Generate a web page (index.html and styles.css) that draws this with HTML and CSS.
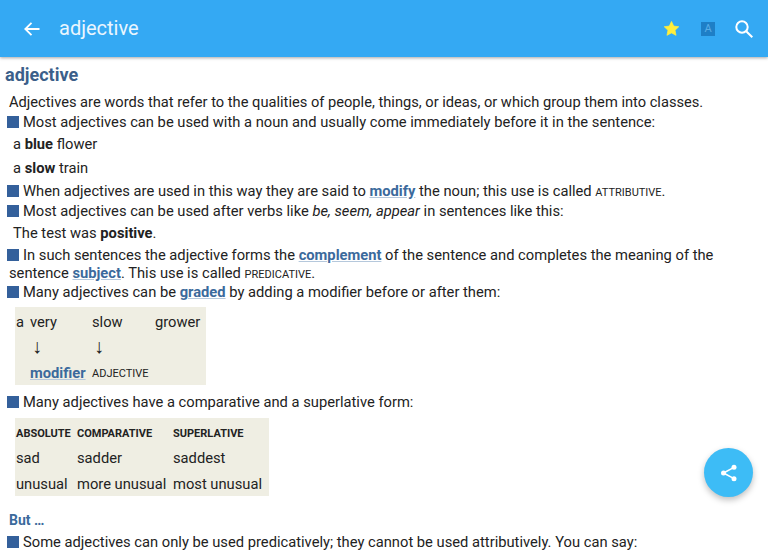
FILE: index.html
```html
<!DOCTYPE html>
<html lang="en">
<head>
<meta charset="UTF-8">
<meta name="viewport" content="width=device-width, initial-scale=1.0">
<title>adjective</title>
<link rel="stylesheet" href="styles.css">
</head>
<body>
<!-- App bar -->
<header class="app-bar">
<svg class="back-icon" width="24" height="24" viewBox="0 0 24 24"><path d="M19.500 12H5.500M11.500 5.800L5.300 12l6.200 6.200" fill="none" stroke="#fff" stroke-width="1.800"/></svg>
<div class="app-title">adjective</div>
<svg class="star-icon" width="17" height="17" viewBox="0 0 24 24"><path d="M12 2l3.100 6.600 7.200.9-5.300 5 1.400 7.200L12 18.200l-6.400 3.500L7 14.500l-5.300-5 7.200-.9z" fill="#ffee3b" stroke="#ffee3b" stroke-linejoin="round"/></svg>
<div class="font-icon">A</div>
<svg class="search-icon" width="20" height="20" viewBox="0 0 20 20"><circle cx="8" cy="8" r="5.700" fill="none" stroke="#fff" stroke-width="2"/><path d="M12.200 12.200l6.100 6.100" fill="none" stroke="#fff" stroke-width="2"/></svg>
</header>

<main class="content">
<h1 class="entry-title">adjective</h1>
<p class="intro">Adjectives are words that refer to the qualities of people, things, or ideas, or which group them into classes.</p>
<p class="point"><span class="square"></span>Most adjectives can be used with a noun and usually come immediately before it in the sentence:</p>
<p class="example ex-first">a <b>blue</b> flower</p>
<p class="example ex-second">a <b>slow</b> train</p>
<p class="point"><span class="square"></span>When adjectives are used in this way they are said to <a href="#">modify</a> the noun; this use is called <span class="caps">ATTRIBUTIVE</span>.</p>
<p class="point"><span class="square"></span>Most adjectives can be used after verbs like <i>be, seem, appear</i> in sentences like this:</p>
<p class="example ex-test">The test was <b>positive</b>.</p>
<p class="point para"><span class="square"></span>In such sentences the adjective forms the <a href="#">complement</a> of the sentence and completes the meaning of the sentence <a href="#">subject</a>. This use is called <span class="caps">PREDICATIVE</span>.</p>
<p class="point"><span class="square"></span>Many adjectives can be <a href="#">graded</a> by adding a modifier before or after them:</p>

<table class="box box-graded">
<tr><td class="col-a">a</td><td class="col-b">very</td><td class="col-c">slow</td><td>grower</td></tr>
<tr><td></td><td class="arrow">↓</td><td class="arrow">↓</td><td></td></tr>
<tr class="last"><td></td><td><a href="#">modifier</a></td><td class="small-caps">ADJECTIVE</td><td></td></tr>
</table>

<p class="point"><span class="square"></span>Many adjectives have a comparative and a superlative form:</p>

<table class="box box-forms">
<tr class="head"><td class="col-1">ABSOLUTE</td><td class="col-2">COMPARATIVE</td><td>SUPERLATIVE</td></tr>
<tr><td>sad</td><td>sadder</td><td>saddest</td></tr>
<tr class="last"><td>unusual</td><td>more unusual</td><td>most unusual</td></tr>
</table>

<h2 class="subhead">But …</h2>
<p class="point"><span class="square"></span>Some adjectives can only be used predicatively; they cannot be used attributively. You can say:</p>
</main>

<button class="fab">
<svg width="20" height="20" viewBox="0 0 20 20"><path d="M4.500 10L15 4.300M4.500 10L15 15.700" fill="none" stroke="#fff" stroke-width="1.500"/><circle cx="4.500" cy="10" r="2.500" fill="#fff"/><circle cx="15" cy="4.300" r="2.500" fill="#fff"/><circle cx="15" cy="15.700" r="2.500" fill="#fff"/></svg>
</button>
</body>
</html>
```

FILE: styles.css
```css
html, body {
    height: 100%;
}
body {
    margin: 0;
    padding: 0;
    overflow: hidden;
    background-color: #fff;
    color: #222;
    font-family: Roboto, "Liberation Sans", sans-serif;
    font-size: 14.72px;
    line-height: 19px;
    position: relative;
}
.app-bar {
    height: 57px;
    background-color: #34a9f3;
    box-shadow: 0 1px 3px rgba(0, 0, 0, 0.35);
    display: flex;
    align-items: center;
    color: #fff;
}
.back-icon {
    margin-left: 20px;
}
.app-title {
    margin-left: 15px;
    font-size: 20px;
    flex: 1;
    color: #eaf6fe;
}
.star-icon {
    margin-right: 21px;
}
.font-icon {
    width: 14px;
    height: 14px;
    background-color: #1e7fc6;
    color: #5aaee6;
    font-size: 11px;
    line-height: 14px;
    text-align: center;
    margin-right: 19px;
}
.search-icon {
    margin-right: 14px;
}
.content {
    padding: 7px 0 0 9px;
}
p {
    margin: 0;
}
.entry-title {
    margin: 0 0 7px -4px;
    font-size: 18px;
    line-height: 22px;
    font-weight: bold;
    color: #3b5f8a;
}
.intro {
    margin-bottom: 1px;
    font-size: 14.67px;
}
.square {
    display: inline-block;
    width: 12px;
    height: 12px;
    margin: 0 4px 0 -2px;
    background-color: #34609b;
    vertical-align: -1px;
}
.example {
    margin-left: 4px;
}
.ex-first {
    margin-top: 3px;
}
.ex-second {
    margin-top: 5px;
    margin-bottom: 4px;
}
.ex-test {
    margin-top: 3px;
    margin-bottom: 3px;
}
.para {
    line-height: 18px;
    margin-bottom: -1px;
}
a {
    color: #3b6a9c;
    font-weight: bold;
    text-decoration: underline;
    text-decoration-color: #b5c8dc;
}
.caps {
    font-size: 11px;
}
.box {
    background-color: #efeee3;
    border-collapse: collapse;
    margin-left: 6px;
}
.box td {
    padding: 6px 0 0;
    white-space: nowrap;
}
.box .last td {
    padding: 7px 0 2px;
}
.box-graded {
    margin-top: 5px;
    margin-bottom: 8px;
    width: 191px;
}
.box .col-a {
    width: 14px;
    padding-left: 1px;
}
.col-b { width: 62px; }
.col-c { width: 63px; }
.box .arrow {
    padding: 5px 0 1px 2px;
    font-size: 20px;
}
.small-caps {
    font-size: 11px;
}
.box-forms {
    margin-top: 6px;
    margin-bottom: 15px;
    width: 254px;
}
.box-forms td:first-child {
    padding-left: 1px;
}
.head td {
    font-size: 11px;
    font-weight: bold;
}
.col-1 { width: 61px; }
.col-2 { width: 96px; }
.subhead {
    margin: 0 0 4px;
    font-size: 14px;
    line-height: 18px;
    font-weight: bold;
    color: #3b6a9c;
}
.fab {
    position: absolute;
    left: 704px;
    top: 448px;
    width: 49px;
    height: 49px;
    border: none;
    border-radius: 50%;
    padding: 0;
    background-color: #3dbcf6;
    box-shadow: 0 3px 6px rgba(0, 0, 0, 0.25);
    display: flex;
    align-items: center;
    justify-content: center;
}
```
